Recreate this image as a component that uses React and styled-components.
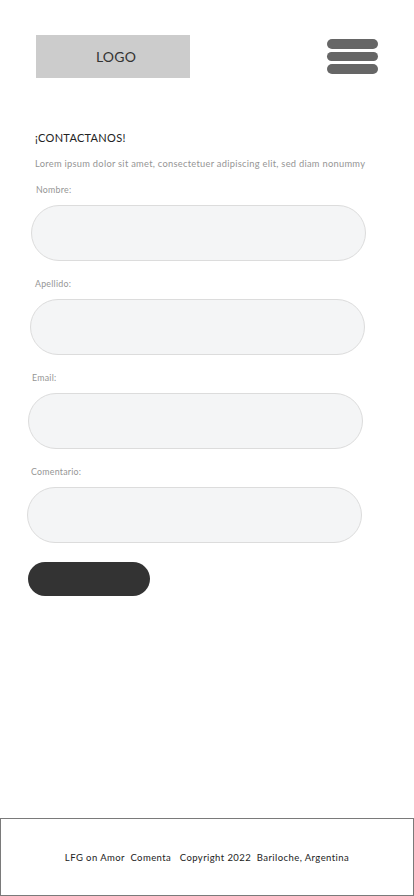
import styled, { createGlobalStyle } from 'styled-components'

const GlobalStyle = createGlobalStyle`
  html, body {
    margin: 0;
    padding: 0;
    background: #ffffff;
  }
  body {
    font-family: Lato, "Liberation Sans", sans-serif;
  }
`

const Page = styled.div`
  width: 414px;
  min-height: 896px;
  display: flex;
  flex-direction: column;
  box-sizing: border-box;
`

const Header = styled.header`
  display: flex;
  justify-content: space-between;
  align-items: flex-start;
  padding: 35px 36px 0 36px;
`

const Logo = styled.div`
  width: 154px;
  height: 43px;
  box-sizing: border-box;
  padding-left: 6px;
  background: #cccccc;
  display: flex;
  align-items: center;
  justify-content: center;
  font-size: 14px;
  color: #333333;
  letter-spacing: 0.2px;
`

const Burger = styled.button`
  margin-top: 4px;
  padding: 0;
  border: 0;
  background: transparent;
  display: flex;
  flex-direction: column;
  gap: 3px;
`

const BurgerBar = styled.span`
  display: block;
  width: 51px;
  height: 9.5px;
  border-radius: 5px;
  background: #666666;
`

const Main = styled.main`
  flex: 1;
  padding: 53px 0 0 0;
`

const Title = styled.h2`
  margin: 0 0 0 35px;
  font-size: 11px;
  font-weight: 400;
  color: #222222;
  line-height: 14px;
  letter-spacing: 0.3px;
`

const Intro = styled.p`
  margin: 13px 0 0 35px;
  font-size: 9.3px;
  color: #959595;
  line-height: 12px;
  white-space: nowrap;
  letter-spacing: 0.28px;
`

const Form = styled.form`
  display: flex;
  flex-direction: column;
  margin-top: 14px;
`

const Field = styled.div`
  display: flex;
  flex-direction: column;
  margin-bottom: 17px;
`

const Label = styled.label`
  margin-left: ${(p) => p.$shift}px;
  font-size: 8.8px;
  color: #959595;
  line-height: 12px;
  margin-bottom: 9px;
  letter-spacing: 0.25px;
`

const Input = styled.input`
  margin-left: ${(p) => p.$shift}px;
  width: 335px;
  height: 56px;
  box-sizing: border-box;
  border-radius: 28px;
  border: 1px solid #dcdcdc;
  background: #f4f5f6;
  outline: none;
  padding: 0 20px;
`

const Send = styled.button`
  margin: 2px 0 0 28px;
  width: 122px;
  height: 34px;
  border: 0;
  border-radius: 17px;
  background: #333333;
`

const Footer = styled.footer`
  height: 78px;
  box-sizing: border-box;
  border: 1px solid #7a7a7a;
  display: flex;
  align-items: center;
  justify-content: center;
  font-size: 9.5px;
  color: #222222;
  letter-spacing: 0.42px;
`

const fields = [
  { name: 'nombre', label: 'Nombre:', labelShift: 36, inputShift: 31 },
  { name: 'apellido', label: 'Apellido:', labelShift: 35, inputShift: 30 },
  { name: 'email', label: 'Email:', labelShift: 32, inputShift: 28 },
  { name: 'comentario', label: 'Comentario:', labelShift: 31, inputShift: 27 },
]

const App = () => (
  <>
    <GlobalStyle />
    <Page>
      <Header>
        <Logo>LOGO</Logo>
        <Burger type="button" aria-label="menu">
          <BurgerBar />
          <BurgerBar />
          <BurgerBar />
        </Burger>
      </Header>
      <Main>
        <Title>¡CONTACTANOS!</Title>
        <Intro>Lorem ipsum dolor sit amet, consectetuer adipiscing elit, sed diam nonummy</Intro>
        <Form onSubmit={(e) => e.preventDefault()}>
          {fields.map((f) => (
            <Field key={f.name}>
              <Label htmlFor={f.name} $shift={f.labelShift}>{f.label}</Label>
              <Input id={f.name} $shift={f.inputShift} />
            </Field>
          ))}
          <Send type="submit" aria-label="enviar" />
        </Form>
      </Main>
      <Footer>
        LFG on Amor&nbsp; Comenta&nbsp;&nbsp; Copyright 2022&nbsp; Bariloche, Argentina
      </Footer>
    </Page>
  </>
)

export default App
